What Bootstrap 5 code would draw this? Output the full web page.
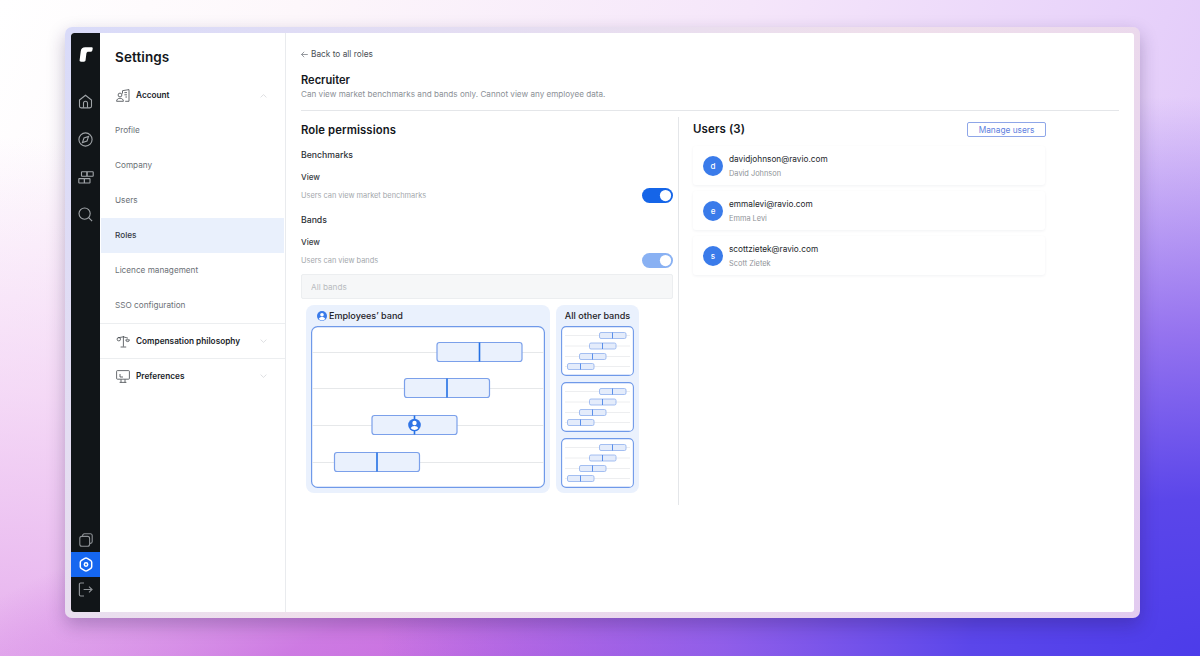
<!DOCTYPE html>
<html lang="en">
<head>
<meta charset="utf-8">
<title>Settings</title>
<link href="https://cdn.jsdelivr.net/npm/bootstrap@5.3.0/dist/css/bootstrap.min.css" rel="stylesheet">
<style>
html,body{height:100%}
body{font-family:Inter,"Liberation Sans",sans-serif;overflow:hidden;color:#14171c;padding:27px 60px 38px 65px;
background:
 radial-gradient(820px 560px at 100% 100%,#4c3cea 0%,#5b46ea 28%,rgba(125,88,236,.75) 58%,rgba(170,130,240,0) 100%),
 radial-gradient(680px 210px at 50% 106%,#c05cdc 0%,rgba(194,95,221,.75) 50%,rgba(194,95,221,0) 100%),
 radial-gradient(760px 520px at 0% 100%,#e6b0ee 0%,rgba(238,195,242,.6) 50%,rgba(240,205,245,0) 100%),
 linear-gradient(115deg,#fff 0%,#fdf7fb 20%,#f5e6fa 50%,#e6d0fa 78%,#d8bcf8 100%);}
.frame{height:591px;padding:6px;border-radius:7px;background:linear-gradient(135deg,#d9dbf9 0%,#efdfeb 50%,#e2cbf0 100%);box-shadow:0 7px 18px rgba(40,20,80,.28)}
.shell{height:100%;background:#fff;border-radius:3px;overflow:hidden}
.rail{width:29px;background:#111518;padding-bottom:10px;border-radius:3px 0 0 3px}
.rail-logo{height:49px;padding-top:14px}
.rail-top{height:38px}
.rail-top.last{height:36px}
.rail-low{height:25px}
.rail-low.active{background:#1566f0}
.rail svg{display:block}
.panel{width:186px;border-right:1px solid #e9ebee}
.panel-title{font-size:13.5px;font-weight:600;line-height:17px;padding:16px 0 12px 15px;letter-spacing:.1px}
.sect{height:35px;padding:0 16px 0 16px;font-size:8.25px;font-weight:600;color:#20242a;gap:6px}
.sect .chev{margin-left:auto;margin-right:2px}
.sect-line{border-top:1px solid #eceef0}
.sub{height:35px;padding-left:15px;font-size:8.2px;color:#6b7076;text-decoration:none;display:flex;align-items:center}
.sub.active{background:#e9f0fc;color:#343a44;font-weight:500;margin-left:1px;padding-left:14px;margin-right:1px}
.main{padding:15px 15px 0 15px;min-width:0}
.back{font-size:8.3px;color:#4b5056;height:12px;line-height:12px;margin-bottom:13px;gap:3px}
.h-role{font-size:11.1px;font-weight:600;line-height:14px;margin:0 0 1px}
.desc{font-size:8.13px;color:#8b9096;line-height:12px;margin:0 0 10px}
.sep{border-top:1px solid #e4e6e9}
.cols{margin-top:6px}
.col-l{width:372px;flex:none}
.divline{width:1px;background:#e4e6e9;height:388px;margin:0 14px 0 5px;flex:none}
.col-r{width:352px;flex:none}
.h-sec{font-size:11.5px;font-weight:600;line-height:14px;margin:0;letter-spacing:.1px}
.h-sec.perm{font-size:11.3px}
.h-perm{font-size:8.7px;font-weight:500;color:#2c3036;line-height:12px;margin:0}
.lbl{font-size:8px;font-weight:500;color:#3a3e44;line-height:10px}
.hint{font-size:7.4px;color:#a3a7ac;line-height:10px}
.tog.form-switch{padding:0;margin:0;min-height:0;height:15px}
.tog .form-check-input{width:31px;height:15px;margin:0;border:0;float:none;display:block}
.tog .form-check-input:checked{background-color:#1565e8}
.tog .form-check-input:disabled{opacity:.5}
.bandsel.form-control{height:25px;font-size:8.2px;border-radius:2px;padding:0 9px;background:#f6f7f8;border:1px solid #eceef0;color:#b5b8bc}
.bandsel.form-control::placeholder{color:#b9bcc0;opacity:1}
.bandwrap{margin:6px 0 0 5px;gap:6px}
.bpanel{background:#eaf1fd;border-radius:8px;padding:0 5px 5px}
.bpanel.wide{width:244px}
.bpanel.narrow{width:83px}
.bhead{font-size:9.05px;font-weight:500;height:21px;line-height:21px;color:#1e2228;gap:2px;white-space:nowrap}
.bpanel svg{display:block}
.mini-stack{row-gap:6px}
.mgr.btn{font-size:8.3px;line-height:10px;padding:2px 0;width:79px;height:15px;border-radius:2px;color:#5f7fe0;border:1px solid #8ea6e8;background:#fff;font-weight:400;margin-right:-1px}
.ucard.card{height:39px;margin-bottom:6px;border:0;border-radius:3px;box-shadow:0 1px 3px rgba(20,30,60,.06);padding:0 0 0 10px;gap:6px}
.ava{width:20px;height:20px;background:#3a7bea;color:#fff;font-size:8px;font-weight:500;flex:none}
.mail{font-size:8.27px;line-height:10px;color:#25282d;margin-bottom:5px}
.uname{font-size:7.4px;line-height:10px;color:#8f9398}
.utext{padding-top:1px}
.gap-top-h{margin-top:6px}
.gap-top-p{margin-top:12px}
.gap-top-b{margin-top:11px}
.gap-top-v{margin-top:11px}
.hintrow{margin-top:6px;height:15px}
.sel-gap{margin-top:6px}
.users-head{margin-top:4px;margin-bottom:9px;height:16px}
.ico-lead{margin-left:6px}
</style>
</head>
<body>
<div class="frame">
<div class="shell d-flex">

  <aside class="rail d-flex flex-column flex-shrink-0">
    <div class="rail-logo d-flex justify-content-center">
      <svg width="14" height="15" viewBox="0 0 14 15"><path d="M.6 13.300 1.700 4.400C2 1.600 3.600.3 6.200.3h6.300c1 0 1.400.6 1.200 1.500l-.4 1.700c-.2.800-.7 1.200-1.500 1.200H9.500c-1.200 0-1.900.6-2.100 1.800l-.8 6.600c-.1 1-.7 1.600-1.700 1.600H2.100C1 14.700.5 14.300.6 13.300z" fill="#fff"/></svg>
    </div>
    <div class="rail-top d-flex align-items-center justify-content-center">
      <svg width="15" height="15" viewBox="0 0 15 15" fill="none" stroke="#a0a4a8" stroke-width="1.100"><path d="M1.500 6 7.500 1.200 13.500 6v6.300a1.600 1.600 0 0 1-1.600 1.600H3.100a1.600 1.600 0 0 1-1.600-1.600z"/><path d="M5.500 13.800V9.300a2 2 0 0 1 4 0v4.500"/></svg>
    </div>
    <div class="rail-top d-flex align-items-center justify-content-center">
      <svg width="15" height="15" viewBox="0 0 15 15" fill="none" stroke="#a0a4a8" stroke-width="1.100"><circle cx="7.500" cy="7.500" r="6.600"/><path d="M10.600 4.400 9 9 4.400 10.600 6 6z"/></svg>
    </div>
    <div class="rail-top d-flex align-items-center justify-content-center">
      <svg width="16" height="13" viewBox="0 0 16 13" fill="none" stroke="#a0a4a8" stroke-width="1.100"><rect x="3.500" y=".8" width="5.500" height="4.400" rx=".5"/><rect x="9" y=".8" width="6.200" height="4.400" rx=".5"/><rect x=".8" y="7.600" width="5.600" height="4.400" rx=".5"/><rect x="6.400" y="7.600" width="5.600" height="4.400" rx=".5"/></svg>
    </div>
    <div class="rail-top last d-flex align-items-center justify-content-center">
      <svg width="15" height="15" viewBox="0 0 15 15" fill="none" stroke="#a0a4a8" stroke-width="1.100"><circle cx="6.600" cy="6.600" r="5.600"/><path d="m10.700 10.700 3.400 3.400"/></svg>
    </div>
    <div class="mt-auto rail-low d-flex align-items-center justify-content-center">
      <svg width="14" height="14" viewBox="0 0 14 14" fill="none" stroke="#8d9195" stroke-width="1.100"><rect x=".8" y="3.400" width="9.800" height="9.800" rx="2"/><path d="M3.600 3.200V2.600A1.800 1.800 0 0 1 5.400.8h6a1.800 1.800 0 0 1 1.800 1.800v6a1.800 1.800 0 0 1-1.800 1.800h-.6"/></svg>
    </div>
    <div class="rail-low active d-flex align-items-center justify-content-center">
      <svg width="14" height="15" viewBox="0 0 14 15" fill="none" stroke="#fff" stroke-width="1.500"><path d="M5.800 1.400a2.400 2.400 0 0 1 2.400 0l3.300 1.900a2.400 2.400 0 0 1 1.200 2.100v4.200a2.400 2.400 0 0 1-1.200 2.100l-3.300 1.900a2.400 2.400 0 0 1-2.400 0l-3.300-1.900a2.400 2.400 0 0 1-1.200-2.100V5.400a2.400 2.400 0 0 1 1.200-2.100z"/><circle cx="7" cy="7.500" r="1.700"/></svg>
    </div>
    <div class="rail-low d-flex align-items-center justify-content-center">
      <svg width="15" height="15" viewBox="0 0 15 15" fill="none" stroke="#8d9195" stroke-width="1.200"><path d="M6 1H2.600A1.200 1.200 0 0 0 1.400 2.200v10.600A1.200 1.200 0 0 0 2.600 14H6"/><path d="M5.600 7.500h8.400M11 4.600l3 2.900-3 2.900"/></svg>
    </div>
  </aside>

  <nav class="panel flex-shrink-0">
    <div class="panel-title">Settings</div>
    <div class="sect d-flex align-items-center">
      <svg width="14" height="13" viewBox="0 0 14 13" fill="none" stroke="#43474d" stroke-width=".8"><circle cx="4" cy="6" r="1.900"/><path d="M.6 12.300c0-2 1.500-3 3.400-3s3.400 1 3.400 3zM6.500 4.600V1.700L13 .6v11.700H9.200M8.400 3.600h2.600M8.400 5.800h2.600M9.400 8h1.600"/></svg>
      <span>Account</span>
      <svg class="chev" width="7" height="4" viewBox="0 0 7 4" fill="none" stroke="#d5d7da" stroke-width=".8"><path d="m.6 3.400 2.900-2.800 2.900 2.800"/></svg>
    </div>
    <a class="sub" href="#">Profile</a>
    <a class="sub" href="#">Company</a>
    <a class="sub" href="#">Users</a>
    <a class="sub active" href="#">Roles</a>
    <a class="sub" href="#">Licence management</a>
    <a class="sub" href="#">SSO configuration</a>
    <div class="sect d-flex align-items-center sect-line">
      <svg width="14" height="13" viewBox="0 0 14 13" fill="none" stroke="#43474d" stroke-width=".8"><path d="M7.400 1v10.600M4.600 12h5.600M2 2.800l5.400-1L12 3.200"/><circle cx="2.800" cy="4.200" r="1.700"/><path d="M9.800 4.800h3.600a1.800 1.800 0 0 1-3.600 0z"/></svg>
      <span>Compensation philosophy</span>
      <svg class="chev" width="7" height="4" viewBox="0 0 7 4" fill="none" stroke="#d5d7da" stroke-width=".8"><path d="m.6.6 2.900 2.800L6.400.6"/></svg>
    </div>
    <div class="sect d-flex align-items-center sect-line">
      <svg width="14" height="13" viewBox="0 0 14 13" fill="none" stroke="#43474d" stroke-width=".8"><rect x=".6" y=".6" width="12.800" height="8.600" rx=".8"/><path d="M5 9.400v3M9 9.400v3M3.600 12.400h6.800M4 4v3h3"/></svg>
      <span>Preferences</span>
      <svg class="chev" width="7" height="4" viewBox="0 0 7 4" fill="none" stroke="#d5d7da" stroke-width=".8"><path d="m.6.6 2.900 2.800L6.400.6"/></svg>
    </div>
  </nav>

  <main class="main flex-grow-1">
    <div class="back d-flex align-items-center">
      <svg width="7" height="7" viewBox="0 0 7 7" fill="none" stroke="#6a6f75" stroke-width=".7"><path d="M6.800 3.500H.5M3.200.8.5 3.500l2.700 2.700"/></svg>
      <span>Back to all roles</span>
    </div>
    <h1 class="h-role">Recruiter</h1>
    <p class="desc">Can view market benchmarks and bands only. Cannot view any employee data.</p>
    <div class="sep"></div>
    <div class="cols d-flex">
      <section class="col-l">
        <h2 class="h-sec perm gap-top-h">Role permissions</h2>
        <h3 class="h-perm gap-top-p">Benchmarks</h3>
        <div class="lbl gap-top-v">View</div>
        <div class="d-flex justify-content-between align-items-center hintrow">
          <span class="hint">Users can view market benchmarks</span>
          <div class="form-check form-switch tog"><input class="form-check-input" type="checkbox" role="switch" checked aria-label="View benchmarks"></div>
        </div>
        <h3 class="h-perm gap-top-b">Bands</h3>
        <div class="lbl gap-top-v">View</div>
        <div class="d-flex justify-content-between align-items-center hintrow">
          <span class="hint">Users can view bands</span>
          <div class="form-check form-switch tog"><input class="form-check-input" type="checkbox" role="switch" checked disabled aria-label="View bands"></div>
        </div>
        <input class="form-control bandsel sel-gap" type="text" placeholder="All bands" disabled>
        <div class="d-flex bandwrap">
          <div class="bpanel wide">
            <div class="bhead d-flex align-items-center">
              <svg class="ico-lead" width="10" height="10" viewBox="0 0 10 10"><circle cx="5" cy="5" r="5" fill="#3a7bea"/><circle cx="5" cy="3.800" r="1.800" fill="#fff"/><path d="M1.800 8c.5-1.300 1.800-1.900 3.200-1.900S7.700 6.700 8.200 8A4.300 4.300 0 0 1 1.800 8z" fill="#fff"/></svg>
              <span>Employees’ band</span>
            </div>
            <svg width="234" height="162" viewBox="0 0 234 162" fill="none">
              <rect x=".6" y=".6" width="232.800" height="160.800" rx="6" fill="#fff" stroke="#6f99e9" stroke-width="1.200"/>
              <g stroke="#e6e8ea" stroke-width="1"><path d="M1 26.500h232M1 62.500h232M1 99.500h232M1 136.500h232"/></g>
              <g fill="#eaf1fd" stroke="#7ba0ea" stroke-width="1.200">
                <rect x="126" y="16.500" width="85" height="19" rx="2.500"/>
                <rect x="93.500" y="52.500" width="85" height="19" rx="2.500"/>
                <rect x="61" y="89.500" width="85" height="19" rx="2.500"/>
                <rect x="23.500" y="126.500" width="85" height="19" rx="2.500"/>
              </g>
              <g stroke="#2470e4" stroke-width="1.600"><path d="M168.500 16.500v19M136 52.500v19M103.500 89.500v19M66 126.500v19"/></g>
              <circle cx="103.500" cy="99" r="6.300" fill="#2f74e6"/><circle cx="103.500" cy="97" r="2.200" fill="#fff"/><path d="M99.800 102.300c.6-1.700 2-2.400 3.700-2.400s3.100.7 3.700 2.400a5 5 0 0 1-7.400 0z" fill="#fff"/>
            </svg>
          </div>
          <div class="bpanel narrow">
            <div class="bhead text-center d-block">All other bands</div>
            <div class="d-flex flex-column mini-stack">
              <svg width="73" height="50" viewBox="0 0 73 50" fill="none"><use href="#mini"/></svg>
              <svg width="73" height="50" viewBox="0 0 73 50" fill="none"><use href="#mini"/></svg>
              <svg width="73" height="50" viewBox="0 0 73 50" fill="none"><use href="#mini"/></svg>
            </div>
            <svg width="0" height="0" class="position-absolute">
              <defs><g id="mini">
                <rect x=".6" y=".6" width="71.800" height="48.800" rx="4.500" fill="#fff" stroke="#6f99e9" stroke-width="1.100"/>
                <path d="M4 9.500h65M4 20h65M4 30.500h65M4 40.500h65" stroke="#e8eaec" stroke-width=".8"/>
                <g fill="#e4ecfb" stroke="#8fb0ee" stroke-width=".8">
                  <rect x="38.500" y="6.500" width="26.500" height="6" rx="1.500"/>
                  <rect x="28.500" y="17" width="26.500" height="6" rx="1.500"/>
                  <rect x="18.500" y="27.500" width="26.500" height="6" rx="1.500"/>
                  <rect x="6.500" y="37.500" width="26.500" height="6" rx="1.500"/>
                </g>
                <path d="M51.500 6.500v6M41.500 17v6M31.500 27.500v6M19.500 37.500v6" stroke="#4a85e8" stroke-width=".9"/>
              </g></defs>
            </svg>
          </div>
        </div>
      </section>
      <div class="divline"></div>
      <section class="col-r">
        <div class="d-flex justify-content-between align-items-center users-head">
          <h2 class="h-sec">Users (3)</h2>
          <button type="button" class="btn mgr">Manage users</button>
        </div>
        <div class="card ucard flex-row align-items-center">
          <span class="ava rounded-circle d-flex align-items-center justify-content-center">d</span>
          <div class="utext"><div class="mail">davidjohnson@ravio.com</div><div class="uname">David Johnson</div></div>
        </div>
        <div class="card ucard flex-row align-items-center">
          <span class="ava rounded-circle d-flex align-items-center justify-content-center">e</span>
          <div class="utext"><div class="mail">emmalevi@ravio.com</div><div class="uname">Emma Levi</div></div>
        </div>
        <div class="card ucard flex-row align-items-center">
          <span class="ava rounded-circle d-flex align-items-center justify-content-center">s</span>
          <div class="utext"><div class="mail">scottzietek@ravio.com</div><div class="uname">Scott Zietek</div></div>
        </div>
      </section>
    </div>
  </main>
</div>
</div>
<script src="https://cdn.jsdelivr.net/npm/bootstrap@5.3.0/dist/js/bootstrap.bundle.min.js"></script>
</body>
</html>
